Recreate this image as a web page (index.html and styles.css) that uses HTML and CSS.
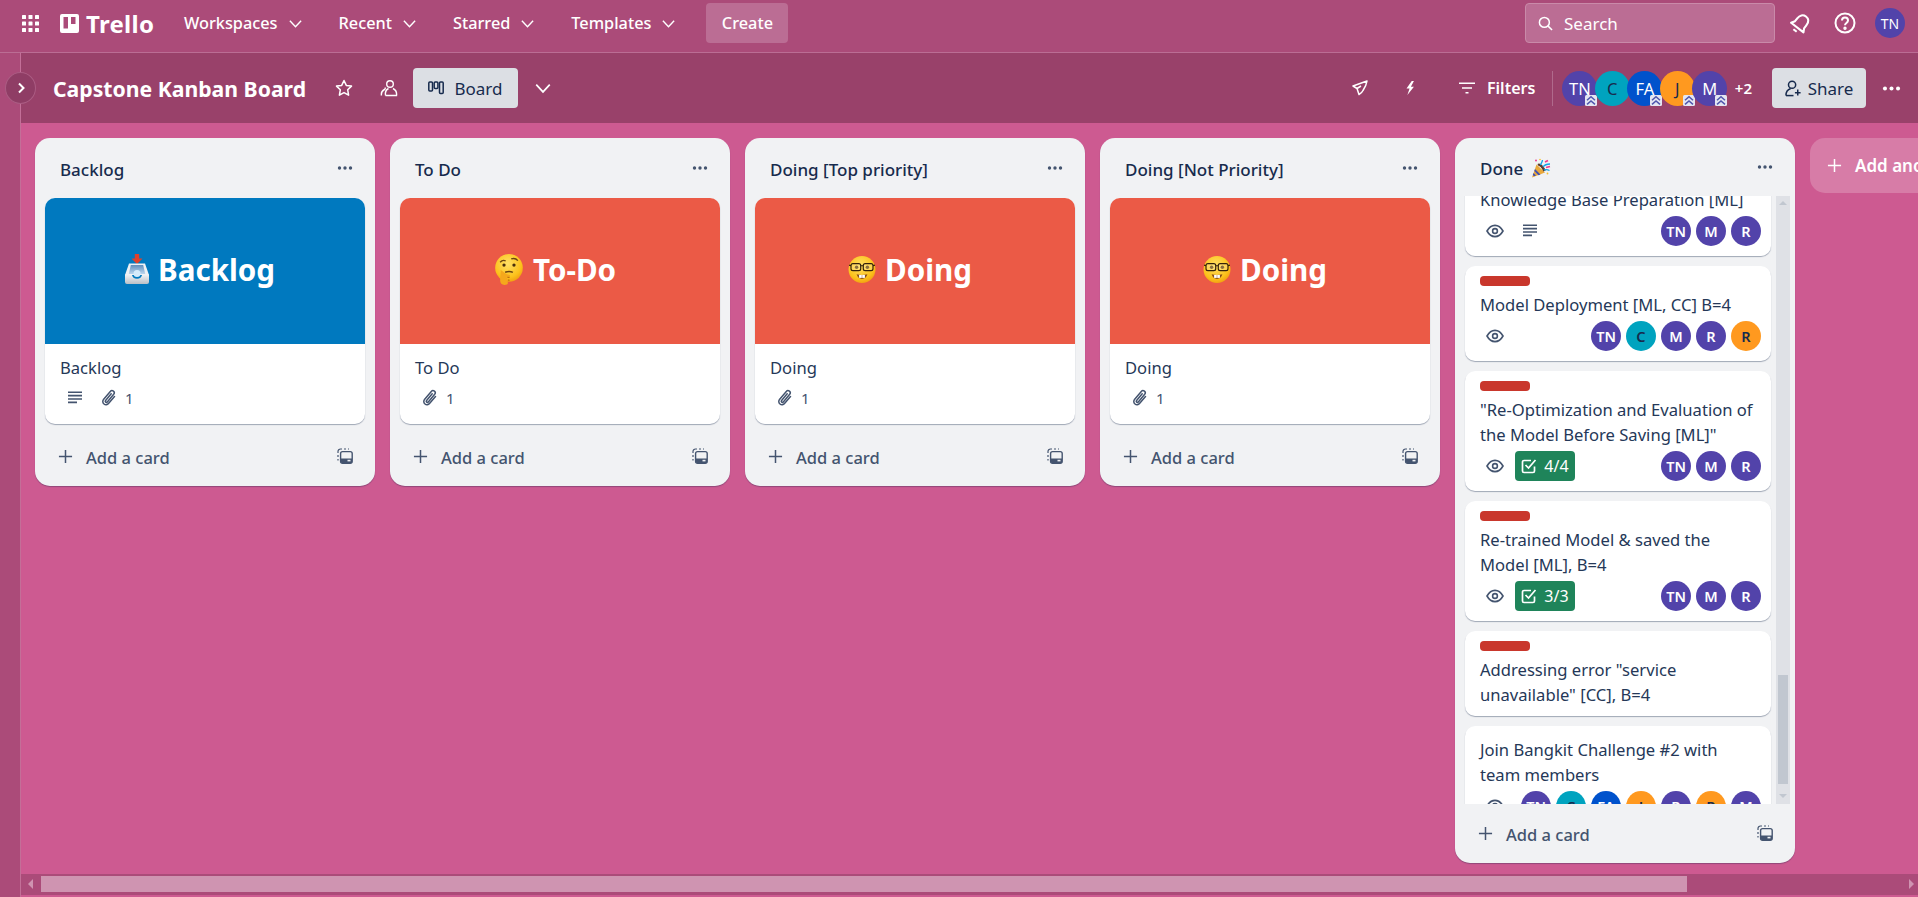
FILE: index.html
```html
<!DOCTYPE html>
<html lang="en">
<head>
  <meta charset="UTF-8" />
  <meta name="viewport" content="width=device-width, initial-scale=1.0"/>
  <title>Capstone Kanban Board | Trello</title>
  <link rel="stylesheet" href="styles.css">
</head>
<body>
  <svg class="icon-defs" aria-hidden="true">
    <defs>
      <radialGradient id="face" cx="45%" cy="35%" r="70%">
        <stop offset="0" stop-color="#ffe066"/>
        <stop offset="0.7" stop-color="#fcc21b"/>
        <stop offset="1" stop-color="#f09a10"/>
      </radialGradient>
      <linearGradient id="tray" x1="0" y1="0" x2="0" y2="1">
        <stop offset="0" stop-color="#5f8fbe"/>
        <stop offset="1" stop-color="#bcd6ee"/>
      </linearGradient>
      <linearGradient id="front" x1="0" y1="0" x2="0" y2="1">
        <stop offset="0" stop-color="#f2f4f6"/>
        <stop offset="1" stop-color="#b9bfc6"/>
      </linearGradient>
    </defs>
    <symbol id="i-chevron" viewBox="0 0 16 16"><path d="M2 5l6 6.5L14 5" fill="none" stroke="currentColor" stroke-width="1.5"/></symbol>
    <symbol id="i-plus" viewBox="0 0 16 16"><path d="M8 1v14M1 8h14" fill="none" stroke="currentColor" stroke-width="1.6"/></symbol>
    <symbol id="i-dots" viewBox="0 0 16 4"><circle cx="2.5" cy="2" r="1.7" fill="currentColor"/><circle cx="8" cy="2" r="1.7" fill="currentColor"/><circle cx="13.5" cy="2" r="1.7" fill="currentColor"/></symbol>
    <symbol id="i-template" viewBox="0 0 16 16">
      <path d="M1 5V3.500A2.500 2.500 0 0 1 3.500 1H5M7 1h2M11 1h1M1 7v2M1 11v1.500" fill="none" stroke="currentColor" stroke-width="1.200"/>
      <rect x="3.600" y="3.600" width="11.600" height="11.600" rx="2" fill="none" stroke="currentColor" stroke-width="1.400"/>
      <path d="M4 10.500h11V14a1 1 0 0 1-1 1H5a1 1 0 0 1-1-1z" fill="currentColor"/>
      <rect x="10.500" y="11.800" width="3" height="1.600" fill="#f1f2f4"/>
    </symbol>
    <symbol id="i-desc" viewBox="0 0 16 14"><path d="M1 1.200h14M1 4.600h14M1 8h14M1 11.400h9" fill="none" stroke="currentColor" stroke-width="1.600"/></symbol>
    <symbol id="i-clip" viewBox="0 0 16 18"><path d="M13.500 7.500l-6 7a3.200 3.200 0 0 1-5-4l6.800-8a2.200 2.200 0 0 1 3.400 2.800l-6.400 7.600a1.100 1.100 0 0 1-1.700-1.400l5.600-6.700" fill="none" stroke="currentColor" stroke-width="1.500" stroke-linecap="round"/></symbol>
    <symbol id="i-eye" viewBox="0 0 18 14"><path d="M1 7c2-3.600 4.800-5.600 8-5.600S15 3.400 17 7c-2 3.600-4.800 5.600-8 5.600S3 10.600 1 7z" fill="none" stroke="currentColor" stroke-width="1.600"/><circle cx="9" cy="7" r="2.400" fill="none" stroke="currentColor" stroke-width="1.600"/></symbol>
    <symbol id="i-check" viewBox="0 0 16 16"><path d="M13.500 8.500V13a1.500 1.500 0 0 1-1.500 1.500H3A1.500 1.500 0 0 1 1.500 13V4A1.500 1.500 0 0 1 3 2.500h7" fill="none" stroke="currentColor" stroke-width="1.700"/><path d="M4.500 7l3 3 7-8" fill="none" stroke="currentColor" stroke-width="1.700"/></symbol>
    <symbol id="i-upgrade" viewBox="0 0 12 11"><rect width="12" height="11" rx="1.500" fill="#e4e6f2"/><path d="M2 5.200l4-3.400 4 3.400M2 9.400l4-3.400 4 3.400" fill="none" stroke="#4f55ad" stroke-width="1.500"/></symbol>

    <symbol id="e-inbox" viewBox="0 0 24 30">
      <path d="M9.800 0h4.400v4.500h3.300L12 10 6.500 4.500h3.300z" fill="#e0402a"/>
      <path d="M4 9.500h16L24 21H0z" fill="#eef1f4"/>
      <path d="M5.800 11h12.400l2 9H3.800z" fill="url(#tray)"/>
      <circle cx="12" cy="19.500" r="3.500" fill="#d5ebfb"/>
      <path d="M0 20.500h6.800a5.300 5.300 0 0 0 10.400 0H24V28a2 2 0 0 1-2 2H2a2 2 0 0 1-2-2z" fill="url(#front)"/>
    </symbol>
    <symbol id="e-think" viewBox="0 0 26 28">
      <circle cx="13" cy="12.500" r="12.500" fill="url(#face)"/>
      <path d="M5 7.500c1.500-1.700 3.600-2 5-1.200M15 4.500c2-.8 4.500-.3 6 1.500" fill="none" stroke="#6b4513" stroke-width="1.200"/>
      <circle cx="8.500" cy="10" r="1.500" fill="#4a2f0c"/>
      <circle cx="17.500" cy="10" r="1.500" fill="#4a2f0c"/>
      <path d="M9.500 16.500c2.500-1 5-1 7 .2" fill="none" stroke="#6b4513" stroke-width="1.300"/>
      <path d="M5.500 14.500l5 3.500 3 1c1 .5.500 2-.5 2h-2l1 5c.2 1.500-1.500 2-3 2-2.500 0-4-1.500-4-4 0-3 .5-6 .5-9.500z" fill="#f5a81c"/>
      <path d="M11.500 21l2 .2M12 23.500l1.500.2" stroke="#b9650f" stroke-width="1"/>
    </symbol>
    <symbol id="e-nerd" viewBox="0 0 26 26">
      <circle cx="13" cy="13" r="12.500" fill="url(#face)"/>
      <circle cx="8" cy="11" r="1.600" fill="#4a2f0c"/>
      <circle cx="18" cy="11" r="1.600" fill="#4a2f0c"/>
      <rect x="2.800" y="7.500" width="9" height="6.500" rx="1.800" fill="#ffe9a0" fill-opacity=".35" stroke="#33210a" stroke-width="1.100"/>
      <rect x="14.200" y="7.500" width="9" height="6.500" rx="1.800" fill="#ffe9a0" fill-opacity=".35" stroke="#33210a" stroke-width="1.100"/>
      <path d="M11.800 9.500h2.400M1 9l1.800.5M25 9l-1.800.5" stroke="#33210a" stroke-width="1.100"/>
      <path d="M8 17.500c3.300.9 6.700.9 10 0-.8 3-2.700 4.300-5 4.300s-4.200-1.300-5-4.300z" fill="#8a4f1c"/>
      <rect x="10.300" y="18" width="2.500" height="2.800" fill="#fff"/>
      <rect x="13.200" y="18" width="2.500" height="2.800" fill="#fff"/>
    </symbol>
    <symbol id="e-party" viewBox="0 0 20 20">
      <path d="M5.500 6.500L14 14.500 1 19.500z" fill="#e9a93a"/>
      <path d="M4 11l5.500 5.500-2 .8L3.300 13zM2.500 15l2.500 2.500-2 .8-1.200-1.200z" fill="#3f51b5"/>
      <path d="M7 7c2-1 5 2 6.500 6" fill="none" stroke="#5d3a2a" stroke-width="2.500"/>
      <path d="M9.500 7c.5-2 2-3 2-5M12 9c1.500-2 4-3 7-3M13 12c2-.5 3.500-.5 5.500.5" fill="none" stroke="#12a5e8" stroke-width="1.300"/>
      <path d="M14 4l3-1.500M15 9.500l4-1" stroke="#ec3d8e" stroke-width="1.600"/>
      <circle cx="5" cy="2.500" r="1" fill="#ec3d8e"/>
      <circle cx="9" cy="1.500" r=".8" fill="#f5c02c"/>
      <circle cx="16.500" cy="15.500" r=".9" fill="#f5c02c"/>
    </symbol>
  </svg>

  <nav class="topnav">
    <svg class="grid-icon" viewBox="0 0 17 17" fill="#fff">
      <rect width="4" height="4" rx=".6"/><rect x="6.500" width="4" height="4" rx=".6"/><rect x="13" width="4" height="4" rx=".6"/>
      <rect y="6.500" width="4" height="4" rx=".6"/><rect x="6.500" y="6.500" width="4" height="4" rx=".6"/><rect x="13" y="6.500" width="4" height="4" rx=".6"/>
      <rect y="13" width="4" height="4" rx=".6"/><rect x="6.500" y="13" width="4" height="4" rx=".6"/><rect x="13" y="13" width="4" height="4" rx=".6"/>
    </svg>
    <div class="logo">
      <svg viewBox="0 0 19 19"><path fill="#fff" fill-rule="evenodd" d="M2 0h15a2 2 0 0 1 2 2v15a2 2 0 0 1-2 2H2a2 2 0 0 1-2-2V2a2 2 0 0 1 2-2zm1.500 3v11.500h4.500V3zm7.500 0v7h4.500V3z"/></svg>
      <span>Trello</span>
    </div>
    <div class="nav-item">Workspaces <svg class="chev"><use href="#i-chevron"/></svg></div>
    <div class="nav-item">Recent <svg class="chev"><use href="#i-chevron"/></svg></div>
    <div class="nav-item">Starred <svg class="chev"><use href="#i-chevron"/></svg></div>
    <div class="nav-item">Templates <svg class="chev"><use href="#i-chevron"/></svg></div>
    <button class="btn-create">Create</button>
    <div class="nav-right">
      <div class="search">
        <svg viewBox="0 0 16 16" fill="none" stroke="#fff" stroke-width="1.600"><circle cx="6.800" cy="6.800" r="5.300"/><path d="M10.800 10.800L15 15"/></svg>
        <span>Search</span>
      </div>
      <svg class="bell" viewBox="0 0 22 22" fill="none" stroke="#fff" stroke-width="2" stroke-linejoin="round"><g transform="rotate(38 11 11)"><path d="M11 2.500c-3.600 0-5.500 2.800-5.500 6.500v3.500L3.500 16h15l-2-3.500V9c0-3.700-1.900-6.500-5.500-6.500z"/><path d="M9 19.500h4"/></g></svg>
      <svg class="help" viewBox="0 0 22 22" fill="none" stroke="#fff" stroke-width="2"><circle cx="11" cy="11" r="9.500"/><path d="M8 8.500c0-4 6-4 6 0 0 2.500-3 2.500-3 4.700"/><circle cx="11" cy="16.300" r=".7" fill="#fff"/></svg>
      <div class="avatar av-me">TN</div>
    </div>
  </nav>

  <div class="board">
    <aside class="side">
      <button class="side-toggle"><svg viewBox="0 0 10 12" fill="none" stroke="#fff" stroke-width="2"><path d="M3 1.500L7.500 6 3 10.500"/></svg></button>
    </aside>
    <main class="board-main">
      <header class="board-head">
        <h1 class="board-title">Capstone Kanban Board</h1>
        <svg class="star" viewBox="0 0 18 18" fill="none" stroke="#fff" stroke-width="1.500"><path d="M9 1.500l2.300 4.900 5.200.7-3.800 3.700.9 5.400L9 13.600l-4.600 2.600.9-5.400L1.500 7.100l5.200-.7z" stroke-linejoin="round"/></svg>
        <svg class="team" viewBox="0 0 18 18" fill="none" stroke="#fff" stroke-width="1.400"><circle cx="10" cy="5" r="3.300"/><path d="M5.500 16.500h11c.5-3.500-1.500-6-3.500-7M1.500 16.500c-.5-2.500 1-5 3-6 .5 0 1-1 .5-2"/><path d="M5.500 16.500c-.5-3 1-6 3-7"/></svg>
        <button class="btn-board">
          <svg viewBox="0 0 16 14" fill="none" stroke="currentColor" stroke-width="1.500"><rect x=".8" y="1" width="3.700" height="9" rx="1"/><rect x="6.200" y="1" width="3.700" height="6.500" rx="1"/><rect x="11.500" y="1" width="3.700" height="11.500" rx="1"/></svg>
          Board
        </button>
        <svg class="head-chev"><use href="#i-chevron"/></svg>
        <div class="head-right">
          <svg class="rocket" viewBox="0 0 16 16" fill="none" stroke="#fff" stroke-width="1.500"><path d="M15 1L1 6l4 2.500L7 14.500c2-1 3-2 4-4 2-3 3.500-6 4-9.500zM5 8.500L9 6" stroke-linejoin="round"/></svg>
          <svg class="bolt" viewBox="0 0 10 16" fill="#fff"><path d="M7 0L1 8.500h3.500L2 16l7.500-9.500H6L9.500 0z"/></svg>
          <div class="filters">
            <svg viewBox="0 0 16 12" fill="none" stroke="#fff" stroke-width="1.600"><path d="M0 1.200h16M3 6h10M6.500 10.800h3"/></svg>
            <span>Filters</span>
          </div>
          <div class="members">
            <div class="avatar-lg av-purple">TN<svg class="up"><use href="#i-upgrade"/></svg></div>
            <div class="avatar-lg av-teal">C</div>
            <div class="avatar-lg av-blue">FA<svg class="up"><use href="#i-upgrade"/></svg></div>
            <div class="avatar-lg av-orange">J<svg class="up"><use href="#i-upgrade"/></svg></div>
            <div class="avatar-lg av-purple">M<svg class="up"><use href="#i-upgrade"/></svg></div>
          </div>
          <span class="more-members">+2</span>
          <button class="btn-share">
            <svg viewBox="0 0 18 18" fill="none" stroke="currentColor" stroke-width="1.600"><circle cx="7.500" cy="5" r="3.800"/><path d="M1 16.500c0-4 2-6.500 5-7.500M13.500 10v6.500M10.500 13.500h6"/><path d="M1 16.500h8"/></svg>
            Share
          </button>
          <svg class="head-dots"><use href="#i-dots"/></svg>
        </div>
      </header>

      <div class="canvas">
        <section class="list">
          <div class="list-head"><h2>Backlog</h2><svg class="list-dots"><use href="#i-dots"/></svg></div>
          <div class="cards">
            <article class="cover-card">
              <div class="cover cover-blue"><svg class="emoji-inbox"><use href="#e-inbox"/></svg><span>Backlog</span></div>
              <div class="cover-body">
                <div class="card-title">Backlog</div>
                <div class="badges">
                  <svg class="ic-desc"><use href="#i-desc"/></svg>
                  <svg class="ic-clip"><use href="#i-clip"/></svg><span class="count">1</span>
                </div>
              </div>
            </article>
          </div>
          <div class="list-foot"><svg class="ic-plus"><use href="#i-plus"/></svg><span>Add a card</span><svg class="ic-template"><use href="#i-template"/></svg></div>
        </section>

        <section class="list">
          <div class="list-head"><h2>To Do</h2><svg class="list-dots"><use href="#i-dots"/></svg></div>
          <div class="cards">
            <article class="cover-card">
              <div class="cover cover-red"><svg class="emoji emoji-wide"><use href="#e-think"/></svg><span>To-Do</span></div>
              <div class="cover-body">
                <div class="card-title">To Do</div>
                <div class="badges">
                  <svg class="ic-clip"><use href="#i-clip"/></svg><span class="count">1</span>
                </div>
              </div>
            </article>
          </div>
          <div class="list-foot"><svg class="ic-plus"><use href="#i-plus"/></svg><span>Add a card</span><svg class="ic-template"><use href="#i-template"/></svg></div>
        </section>

        <section class="list">
          <div class="list-head"><h2>Doing [Top priority]</h2><svg class="list-dots"><use href="#i-dots"/></svg></div>
          <div class="cards">
            <article class="cover-card">
              <div class="cover cover-red"><svg class="emoji"><use href="#e-nerd"/></svg><span>Doing</span></div>
              <div class="cover-body">
                <div class="card-title">Doing</div>
                <div class="badges">
                  <svg class="ic-clip"><use href="#i-clip"/></svg><span class="count">1</span>
                </div>
              </div>
            </article>
          </div>
          <div class="list-foot"><svg class="ic-plus"><use href="#i-plus"/></svg><span>Add a card</span><svg class="ic-template"><use href="#i-template"/></svg></div>
        </section>

        <section class="list">
          <div class="list-head"><h2>Doing [Not Priority]</h2><svg class="list-dots"><use href="#i-dots"/></svg></div>
          <div class="cards">
            <article class="cover-card">
              <div class="cover cover-red"><svg class="emoji"><use href="#e-nerd"/></svg><span>Doing</span></div>
              <div class="cover-body">
                <div class="card-title">Doing</div>
                <div class="badges">
                  <svg class="ic-clip"><use href="#i-clip"/></svg><span class="count">1</span>
                </div>
              </div>
            </article>
          </div>
          <div class="list-foot"><svg class="ic-plus"><use href="#i-plus"/></svg><span>Add a card</span><svg class="ic-template"><use href="#i-template"/></svg></div>
        </section>

        <section class="list list-done">
          <div class="list-head done-head"><h2>Done <svg class="emoji-party"><use href="#e-party"/></svg></h2><svg class="list-dots"><use href="#i-dots"/></svg></div>
          <div class="done-scroll">
            <div class="done-cards">
              <article class="card scrolled">
                <div class="card-title">Knowledge Base Preparation [ML]</div>
                <div class="card-row">
                  <svg class="ic-eye"><use href="#i-eye"/></svg>
                  <svg class="ic-desc-row"><use href="#i-desc"/></svg>
                  <div class="faces"><div class="avatar av-purple">TN</div><div class="avatar av-purple">M</div><div class="avatar av-purple">R</div></div>
                </div>
              </article>
              <article class="card">
                <div class="label"></div>
                <div class="card-title">Model Deployment [ML, CC] B=4</div>
                <div class="card-row">
                  <svg class="ic-eye"><use href="#i-eye"/></svg>
                  <div class="faces"><div class="avatar av-purple">TN</div><div class="avatar av-teal">C</div><div class="avatar av-purple">M</div><div class="avatar av-purple">R</div><div class="avatar av-orange">R</div></div>
                </div>
              </article>
              <article class="card">
                <div class="label"></div>
                <div class="card-title">"Re-Optimization and Evaluation of the Model Before Saving [ML]"</div>
                <div class="card-row">
                  <svg class="ic-eye"><use href="#i-eye"/></svg>
                  <div class="check-badge"><svg><use href="#i-check"/></svg>4/4</div>
                  <div class="faces"><div class="avatar av-purple">TN</div><div class="avatar av-purple">M</div><div class="avatar av-purple">R</div></div>
                </div>
              </article>
              <article class="card">
                <div class="label"></div>
                <div class="card-title">Re-trained Model &amp; saved the Model [ML], B=4</div>
                <div class="card-row">
                  <svg class="ic-eye"><use href="#i-eye"/></svg>
                  <div class="check-badge"><svg><use href="#i-check"/></svg>3/3</div>
                  <div class="faces"><div class="avatar av-purple">TN</div><div class="avatar av-purple">M</div><div class="avatar av-purple">R</div></div>
                </div>
              </article>
              <article class="card card-short">
                <div class="label"></div>
                <div class="card-title">Addressing error "service unavailable" [CC], B=4</div>
              </article>
              <article class="card">
                <div class="card-title">Join Bangkit Challenge #2 with team members</div>
                <div class="card-row">
                  <svg class="ic-eye"><use href="#i-eye"/></svg>
                  <div class="faces"><div class="avatar av-purple">TN</div><div class="avatar av-teal">C</div><div class="avatar av-blue">FA</div><div class="avatar av-orange">J</div><div class="avatar av-purple">R</div><div class="avatar av-orange">R</div><div class="avatar av-purple">M</div></div>
                </div>
              </article>
            </div>
            <div class="vscroll">
              <div class="arrow-up"></div>
              <div class="vthumb"></div>
              <div class="arrow-down"></div>
            </div>
          </div>
          <div class="list-foot done-foot"><svg class="ic-plus"><use href="#i-plus"/></svg><span>Add a card</span><svg class="ic-template"><use href="#i-template"/></svg></div>
        </section>

        <div class="add-list"><svg class="ic-plus"><use href="#i-plus"/></svg><span>Add another list</span></div>
      </div>

      <div class="hscroll">
        <div class="arrow-left"></div>
        <div class="hthumb"></div>
        <div class="arrow-right"></div>
      </div>
    </main>
  </div>
</body>
</html>
```

FILE: styles.css
```css
*
{
  box-sizing: border-box;
}
html, body
{
  height: 100%;
}
body
{
  margin: 0;
  font-family: "Noto Sans", sans-serif;
  font-size: 17px;
  color: #172b4d;
  background: #cd5a91;
  overflow: hidden;
  display: flex;
  flex-direction: column;
}
button
{
  font-family: inherit;
  border: none;
  cursor: pointer;
}
svg
{
  display: block;
  flex: none;
}
.icon-defs
{
  width: 0;
  height: 0;
  position: absolute;
}

/* top nav */
.topnav
{
  height: 53px;
  flex: none;
  display: flex;
  align-items: center;
  padding: 0 13px 6px 22px;
  background: #ab4b79;
  border-bottom: 1px solid #bb6d94;
  color: #fff;
}
.grid-icon
{
  width: 17px;
  height: 17px;
  margin-right: 21px;
}
.logo
{
  display: flex;
  align-items: center;
  gap: 7px;
  width: 124px;
  font-size: 24px;
  font-weight: 700;
  letter-spacing: 0.3px;
}
.logo svg
{
  width: 19px;
  height: 19px;
}
.nav-item
{
  display: flex;
  align-items: center;
  gap: 10px;
  margin-right: 36px;
  font-weight: 500;
  font-size: 16.300px;
}
.chev
{
  width: 15px;
  height: 15px;
}
.btn-create
{
  width: 82px;
  height: 40px;
  margin-left: -6px;
  border-radius: 4px;
  background: #bb6d94;
  color: #fff;
  font-size: 16.300px;
  font-weight: 500;
}
.nav-right
{
  margin-left: auto;
  display: flex;
  align-items: center;
}
.search
{
  width: 250px;
  height: 40px;
  display: flex;
  align-items: center;
  gap: 11px;
  padding-left: 12px;
  border: 1px solid #c98aa9;
  border-radius: 4px;
  background: #bb6d94;
  font-size: 17px;
}
.search svg
{
  width: 15px;
  height: 15px;
}
.bell
{
  width: 23px;
  height: 23px;
  margin-left: 14px;
}
.help
{
  width: 22px;
  height: 22px;
  margin-left: 22px;
}
.avatar
{
  width: 30px;
  height: 30px;
  border-radius: 50%;
  display: flex;
  align-items: center;
  justify-content: center;
  font-size: 14.500px;
  font-weight: 600;
  flex: none;
}
.av-me
{
  margin-left: 19px;
  background: #5243aa;
  color: #fff;
  font-size: 14px;
  font-weight: 400;
}
.av-purple
{
  background: #5243aa;
  color: #fff;
}
.av-teal
{
  background: #00a3bf;
  color: #172b4d;
}
.av-blue
{
  background: #0052cc;
  color: #fff;
}
.av-orange
{
  background: #ff991f;
  color: #172b4d;
}

/* board */
.board
{
  flex: 1;
  min-height: 0;
  display: flex;
}
.side
{
  width: 21px;
  flex: none;
  background: #ab4b79;
  border-right: 1px solid #c36f98;
  position: relative;
}
.side-toggle
{
  position: absolute;
  left: 5px;
  top: 19px;
  width: 31px;
  height: 32px;
  padding: 0;
  border-radius: 50%;
  background: #8f3d65;
  border: 1px solid #ab5c83;
  display: flex;
  align-items: center;
  justify-content: center;
  z-index: 2;
}
.side-toggle svg
{
  width: 10px;
  height: 12px;
}
.board-main
{
  flex: 1;
  min-width: 0;
  display: flex;
  flex-direction: column;
}
.board-head
{
  height: 70px;
  flex: none;
  display: flex;
  align-items: center;
  padding: 0 17px 0 32px;
  background: #99416a;
  color: #fff;
}
.board-title
{
  margin: 0;
  width: 252px;
  font-size: 21.200px;
  font-weight: 700;
  white-space: nowrap;
}
.star
{
  width: 18px;
  height: 18px;
  margin-left: 30px;
}
.team
{
  width: 18px;
  height: 18px;
  margin-left: 27px;
}
.btn-board
{
  width: 105px;
  height: 40px;
  margin-left: 15px;
  border-radius: 4px;
  background: #dcdfe4;
  color: #172b4d;
  font-size: 17px;
  display: flex;
  align-items: center;
  justify-content: center;
  gap: 10px;
}
.btn-board svg
{
  width: 16px;
  height: 14px;
}
.head-chev
{
  width: 18px;
  height: 18px;
  margin-left: 16px;
}
.head-right
{
  margin-left: auto;
  display: flex;
  align-items: center;
}
.rocket
{
  width: 16px;
  height: 16px;
}
.bolt
{
  width: 10px;
  height: 14px;
  margin-left: 37px;
}
.filters
{
  display: flex;
  align-items: center;
  gap: 12px;
  margin-left: 44px;
  font-weight: 600;
  font-size: 16px;
}
.filters svg
{
  width: 16px;
  height: 12px;
}
.members
{
  display: flex;
  margin-left: 17px;
  padding-left: 9px;
  border-left: 1px solid #b06a8c;
}
.avatar-lg
{
  width: 35px;
  height: 35px;
  margin-right: -2.500px;
  border-radius: 50%;
  display: flex;
  align-items: center;
  justify-content: center;
  font-size: 16.500px;
  position: relative;
}
.up
{
  position: absolute;
  right: 0;
  bottom: 0;
  width: 12px;
  height: 11px;
}
.more-members
{
  margin-left: 10px;
  font-size: 15px;
  font-weight: 600;
}
.btn-share
{
  width: 94px;
  height: 40px;
  margin-left: 20px;
  border-radius: 4px;
  background: #dcdfe4;
  color: #172b4d;
  font-size: 17px;
  display: flex;
  align-items: center;
  justify-content: center;
  gap: 6px;
}
.btn-share svg
{
  width: 17px;
  height: 17px;
}
.head-dots
{
  width: 19px;
  height: 5px;
  margin-left: 16px;
}

/* lists */
.canvas
{
  flex: 1;
  min-height: 0;
  display: flex;
  align-items: flex-start;
  gap: 15px;
  padding: 15px 0 0 14px;
  overflow: hidden;
}
.list
{
  width: 340px;
  flex: none;
  background: #f1f2f4;
  border-radius: 15px;
  box-shadow: 0 1px 1px rgba(9,30,66,0.3);
}
.list-head
{
  height: 60px;
  display: flex;
  align-items: center;
  justify-content: space-between;
  padding: 2px 22px 0 25px;
}
.list-head h2
{
  margin: 0;
  font-size: 17px;
  font-weight: 500;
  display: flex;
  align-items: center;
  gap: 8px;
}
.list-dots
{
  width: 16px;
  height: 4px;
  margin-top: -3px;
  color: #44546f;
}
.cards
{
  padding: 0 10px 3px;
}
.cover-card
{
  background: #fff;
  border-radius: 10px;
  box-shadow: 0 1px 1px rgba(9,30,66,0.35);
  overflow: hidden;
}
.cover
{
  height: 146px;
  display: flex;
  align-items: center;
  justify-content: center;
  gap: 9px;
  padding: 0 10px 4px 0;
  color: #fff;
  font-size: 29.600px;
  font-weight: 700;
}
.cover-blue
{
  background: #0079bf;
}
.cover-red
{
  background: #eb5a46;
}
.emoji
{
  width: 28px;
  height: 29px;
}
.emoji-wide
{
  width: 30px;
  height: 31px;
}
.emoji-inbox
{
  width: 24px;
  height: 30px;
}
.emoji-party
{
  width: 20px;
  height: 20px;
}
.cover-body
{
  padding: 11px 15px;
}
.card-title
{
  font-size: 16.600px;
  line-height: 25px;
  color: #253858;
}
.badges
{
  height: 30px;
  margin-top: 3px;
  display: flex;
  align-items: center;
  color: #44546f;
  font-size: 15px;
}
.ic-desc
{
  width: 16px;
  height: 14px;
  margin-left: 7px;
  margin-right: 18px;
}
.ic-clip
{
  width: 16px;
  height: 18px;
  margin-left: 7px;
  margin-right: 8px;
}
.ic-desc + .ic-clip
{
  margin-left: 0;
}
.list-foot
{
  height: 59px;
  display: flex;
  align-items: flex-start;
  padding: 17px 22px 14px 23px;
  color: #44546f;
  font-weight: 500;
  font-size: 16.500px;
  line-height: 28px;
}
.ic-plus
{
  width: 15px;
  height: 15px;
  margin: 5px 13px 0 0;
}
.ic-template
{
  width: 16px;
  height: 16px;
  margin: 4px 0 0 auto;
}

/* done list, scrolled part way down */
.list-done
{
  height: 725px;
  display: flex;
  flex-direction: column;
}
.done-head
{
  height: 58px;
  flex: none;
}
.done-scroll
{
  flex: 1;
  min-height: 0;
  display: flex;
  padding-right: 5px;
}
.done-cards
{
  flex: 1;
  min-width: 0;
  overflow: hidden;
  padding: 0 5px 0 10px;
  display: flex;
  flex-direction: column;
  gap: 10px;
}
.card
{
  flex: none;
  background: #fff;
  border-radius: 10px;
  box-shadow: 0 1px 1px rgba(9,30,66,0.35);
  padding: 10px 15px;
}
.card > .card-title:first-child
{
  margin-top: 1px;
}
.card-short
{
  padding-bottom: 9px;
}
.scrolled
{
  margin-top: -20px;
}
.label
{
  width: 50px;
  height: 10px;
  margin-bottom: 6px;
  border-radius: 4px;
  background: #c9372c;
}
.card-row
{
  height: 30px;
  margin: 4px -5px 0 0;
  display: flex;
  align-items: center;
  color: #44546f;
}
.ic-eye
{
  width: 18px;
  height: 14px;
  margin-left: 6px;
}
.ic-desc-row
{
  width: 16px;
  height: 14px;
  margin-left: 18px;
}
.check-badge
{
  width: 60px;
  height: 30px;
  margin-left: 11px;
  display: flex;
  align-items: center;
  justify-content: center;
  gap: 7px;
  border-radius: 4px;
  background: #1f845a;
  color: #fff;
  font-size: 16px;
}
.check-badge svg
{
  width: 16px;
  height: 16px;
}
.faces
{
  margin-left: auto;
  display: flex;
  gap: 5px;
}
.vscroll
{
  width: 14px;
  flex: none;
  background: #dfe1e6;
  display: flex;
  flex-direction: column;
  align-items: center;
}
.arrow-up
{
  margin-top: 5px;
  border: 4px solid transparent;
  border-top: 0;
  border-bottom: 4px solid #c1c7d0;
}
.vthumb
{
  width: 10px;
  height: 109px;
  margin-top: 470px;
  background: #c1c7d0;
}
.arrow-down
{
  margin-top: 10px;
  border: 4px solid transparent;
  border-bottom: 0;
  border-top: 4px solid #c1c7d0;
}
.done-foot
{
  flex: none;
}
.add-list
{
  width: 340px;
  height: 55px;
  flex: none;
  display: flex;
  align-items: center;
  padding-left: 17px;
  border-radius: 15px;
  background: #d77ca7;
  color: #fff;
  font-weight: 600;
  font-size: 17px;
}
.add-list .ic-plus
{
  margin: 0 13px 0 0;
}

/* page scrollbar */
.hscroll
{
  height: 21px;
  flex: none;
  margin-bottom: 2px;
  padding: 2px 0 3px;
  display: flex;
  align-items: center;
  background: #ab4b79;
}
.arrow-left
{
  margin-left: 7px;
  border: 5px solid transparent;
  border-left: 0;
  border-right: 5px solid #cf94b1;
}
.hthumb
{
  width: 1646px;
  height: 16px;
  margin-left: 8px;
  background: #cf94b1;
}
.arrow-right
{
  margin-left: auto;
  margin-right: 4px;
  border: 5px solid transparent;
  border-right: 0;
  border-left: 5px solid #cf94b1;
}
```
